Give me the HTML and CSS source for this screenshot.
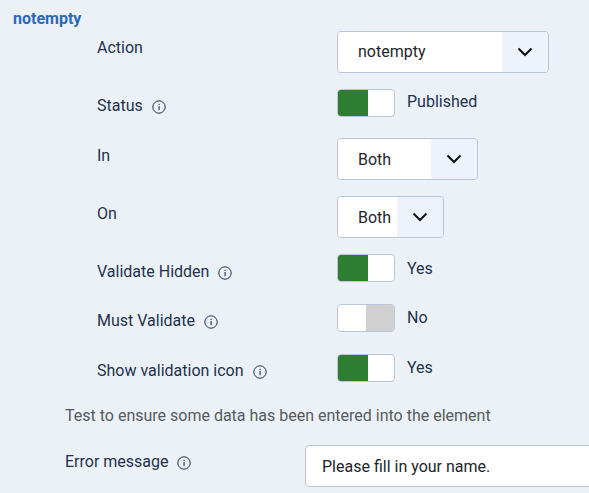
FILE: index.html
```html
<!DOCTYPE html>
<html lang="en">
<head>
  <meta charset="UTF-8" />
  <meta name="viewport" content="width=device-width, initial-scale=1.0"/>
  <title>Validation rule</title>
  <link rel="stylesheet" href="styles.css">
</head>
<body>

<svg class="icon-defs" width="0" height="0">
  <symbol id="info" viewBox="0 0 14 14">
    <circle cx="7" cy="7" r="6.2" fill="none" stroke="currentColor" stroke-width="1"/>
    <rect x="6.5" y="6" width="1.1" height="4.2" fill="currentColor"/>
    <rect x="6.5" y="3.8" width="1.1" height="1.2" fill="currentColor"/>
  </symbol>
  <symbol id="chevron" viewBox="0 0 16 10">
    <path d="M1.5 1.5 L8 8 L14.5 1.5" fill="none" stroke="currentColor" stroke-width="2"/>
  </symbol>
</svg>

<div class="plugin">
  <h3 class="plugin-title">notempty</h3>

  <div class="rule-options">
    <div class="row">
      <div class="label">Action</div>
      <div class="select select-action">
        <span class="select-value">notempty</span>
        <span class="select-arrow"><svg class="chevron"><use href="#chevron"/></svg></span>
      </div>
    </div>

    <div class="row row-toggle row-toggle-first">
      <div class="label">Status <svg class="info"><use href="#info"/></svg></div>
      <div class="toggle-field">
        <div class="toggle toggle-on"><span></span></div>
        <span class="toggle-text">Published</span>
      </div>
    </div>

    <div class="row row-low">
      <div class="label">In</div>
      <div class="select select-in">
        <span class="select-value">Both</span>
        <span class="select-arrow"><svg class="chevron"><use href="#chevron"/></svg></span>
      </div>
    </div>

    <div class="row row-low">
      <div class="label">On</div>
      <div class="select select-on">
        <span class="select-value">Both</span>
        <span class="select-arrow"><svg class="chevron"><use href="#chevron"/></svg></span>
      </div>
    </div>

    <div class="row row-toggle row-low">
      <div class="label">Validate Hidden <svg class="info"><use href="#info"/></svg></div>
      <div class="toggle-field">
        <div class="toggle toggle-on"><span></span></div>
        <span class="toggle-text">Yes</span>
      </div>
    </div>

    <div class="row row-toggle">
      <div class="label">Must Validate <svg class="info"><use href="#info"/></svg></div>
      <div class="toggle-field">
        <div class="toggle toggle-off"><span></span></div>
        <span class="toggle-text">No</span>
      </div>
    </div>

    <div class="row row-toggle">
      <div class="label">Show validation icon <svg class="info"><use href="#info"/></svg></div>
      <div class="toggle-field">
        <div class="toggle toggle-on"><span></span></div>
        <span class="toggle-text">Yes</span>
      </div>
    </div>
  </div>

  <p class="description">Test to ensure some data has been entered into the element</p>

  <div class="row row-message">
    <div class="label">Error message <svg class="info"><use href="#info"/></svg></div>
    <input class="text-input" type="text" value="Please fill in your name." />
  </div>
</div>

</body>
</html>
```

FILE: styles.css
```css
html, body {
  overflow: hidden;
}

body {
  font-family: Roboto, "Liberation Sans", sans-serif;
  font-size: 16px;
  line-height: 24px;
  margin: 0;
  padding: 7px 0 0 13px;
  background-color: #ecf1f7;
  color: #22324d;
}

.icon-defs {
  display: block;
  height: 0;
}

.plugin-title {
  margin: 0;
  font-size: 16px;
  font-weight: 700;
  line-height: 24px;
  color: #2a69b8;
}

.rule-options {
  padding-left: 84px;
}

.row {
  display: grid;
  grid-template-columns: 240px 1fr;
  margin-bottom: 16px;
}

.row-toggle {
  grid-template-rows: 28px;
  margin-bottom: 22px;
}

.row-toggle-first {
  margin-bottom: 21px;
}

.label {
  padding-top: 5px;
}

.row-low .label {
  padding-top: 6px;
}

.info {
  width: 14px;
  height: 14px;
  margin-left: 5px;
  vertical-align: -3px;
}

.select {
  display: flex;
  height: 42px;
  box-sizing: border-box;
  border: 1px solid #b9c5d8;
  border-radius: 4px;
  overflow: hidden;
  color: #22262a;
}

.select-action { width: 212px; }
.select-in { width: 141px; }
.select-on { width: 107px; }

.select-value {
  flex: 1;
  padding-left: 20px;
  line-height: 40px;
  background-color: #ffffff;
}

.row-low .select-value {
  line-height: 42px;
}

.select-arrow {
  display: flex;
  align-items: center;
  justify-content: center;
  width: 46px;
  background-color: #eef3fb;
  color: #111111;
}

.chevron {
  width: 16px;
  height: 10px;
}

.toggle-field {
  display: flex;
  gap: 12px;
  height: 28px;
}

.toggle {
  display: flex;
  width: 58px;
  height: 28px;
  box-sizing: border-box;
  border: 1px solid #b9c5d8;
  border-radius: 4px;
  overflow: hidden;
  background-color: #ffffff;
}

.toggle span {
  display: block;
  height: 100%;
}

.toggle-on span {
  width: 30px;
  background-color: #2e7d32;
}

.toggle-off {
  justify-content: flex-end;
}

.toggle-off span {
  width: 28px;
  background-color: #d0d0d0;
}

.toggle-text {
  line-height: 28px;
}

.row-toggle-first .toggle-text {
  line-height: 26px;
}

.row-low .toggle-text {
  line-height: 29px;
}

.description {
  margin: 0 0 0 52px;
  color: #555a60;
}

.row-message {
  margin: 17px 0 0 52px;
}

.text-input {
  width: 320px;
  height: 42px;
  box-sizing: border-box;
  padding: 0 16px;
  border: 1px solid #b9c5d8;
  border-radius: 4px;
  background-color: #ffffff;
  font: inherit;
  color: #22262a;
}
```
